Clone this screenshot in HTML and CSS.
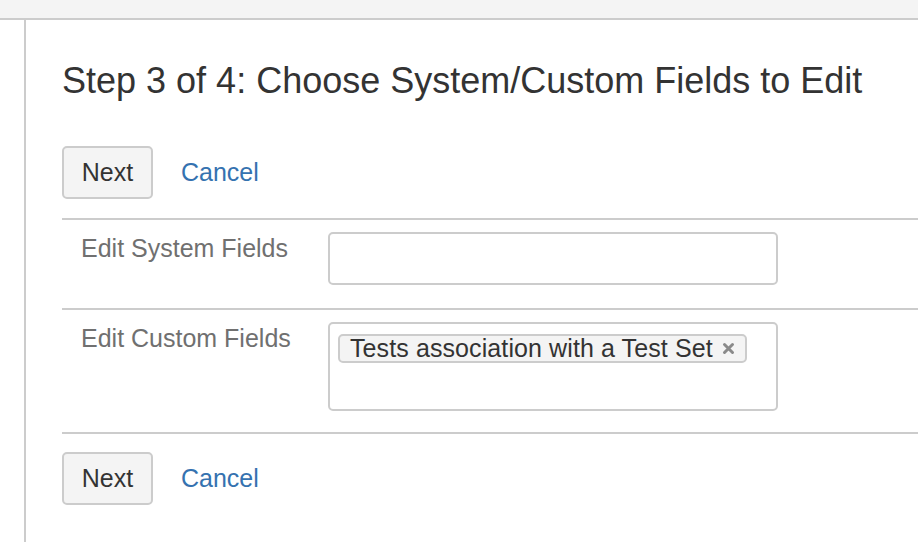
FILE: index.html
```html
<!DOCTYPE html>
<html>
<head>
<meta charset="utf-8">
<link rel="stylesheet" href="styles.css">
</head>
<body>
<div class="topbar"></div>
<div class="layout">
  <div class="sidebar"></div>
  <main class="content">
    <h2 class="title">Step 3 of 4: Choose System/Custom Fields to Edit</h2>
    <div class="actions">
      <button class="btn">Next</button>
      <a class="cancel" href="#">Cancel</a>
    </div>
    <div class="row row-first">
      <label class="label">Edit System Fields</label>
      <div class="field field-small"></div>
    </div>
    <div class="row row-second">
      <label class="label">Edit Custom Fields</label>
      <div class="field field-large">
        <span class="tag">Tests association with a Test Set
          <svg class="tag-x" width="13" height="13" viewBox="0 0 13 13"><path d="M2.5 2.5 L10.5 10.5 M10.5 2.5 L2.5 10.5" stroke="#8a8a8a" stroke-width="3" stroke-linecap="round"/></svg>
        </span>
      </div>
    </div>
    <div class="actions actions-bottom">
      <button class="btn">Next</button>
      <a class="cancel" href="#">Cancel</a>
    </div>
  </main>
</div>
</body>
</html>
```

FILE: styles.css
```css
html, body {
  margin: 0;
  padding: 0;
  background: #fff;
  font-family: "Liberation Sans", Arial, sans-serif;
  color: #333;
}
.topbar {
  height: 18px;
  background: #f4f4f4;
  border-bottom: 2px solid #cccccc;
}
.layout {
  display: flex;
  height: 522px;
}
.sidebar {
  width: 24px;
  border-right: 2px solid #cccccc;
  flex: none;
}
.content {
  flex: 1;
  padding-left: 36px;
}
.title {
  margin: 40px 0 0 0;
  font-size: 36px;
  line-height: 41px;
  font-weight: normal;
  color: #333;
}
.actions {
  display: flex;
  align-items: center;
  margin-top: 45px;
  padding-bottom: 19px;
}
.actions-bottom {
  margin-top: 0;
  padding-top: 18px;
  border-top: 2px solid #cccccc;
}
.btn {
  width: 91px;
  height: 53px;
  box-sizing: border-box;
  border: 2px solid #cccccc;
  border-radius: 5px;
  background: #f4f4f4;
  font-family: "Liberation Sans", Arial, sans-serif;
  font-size: 25px;
  color: #333;
  padding: 0;
}
.cancel {
  margin-left: 28px;
  font-size: 25px;
  color: #3572b0;
  text-decoration: none;
}
.row {
  display: flex;
  align-items: flex-start;
  border-top: 2px solid #cccccc;
  padding: 12px 0 23px 19px;
}
.row-second { padding-bottom: 21px; }
.label {
  width: 247px;
  flex: none;
  font-size: 25px;
  line-height: 30px;
  padding-top: 1px;
  color: #707070;
}
.field {
  width: 450px;
  box-sizing: border-box;
  border: 2px solid #cccccc;
  border-radius: 5px;
  background: #fff;
}
.field-small { height: 53px; }
.field-large {
  height: 89px;
  padding: 10px 8px;
}
.tag {
  display: inline-flex;
  align-items: center;
  height: 29px;
  box-sizing: border-box;
  border: 2px solid #cccccc;
  border-radius: 5px;
  background: #f4f4f4;
  padding: 0 10px 0 10px;
  font-size: 25px;
  line-height: 25px;
  letter-spacing: 0.1px;
  color: #333;
}
.tag-x {
  margin-left: 9px;
}
```
